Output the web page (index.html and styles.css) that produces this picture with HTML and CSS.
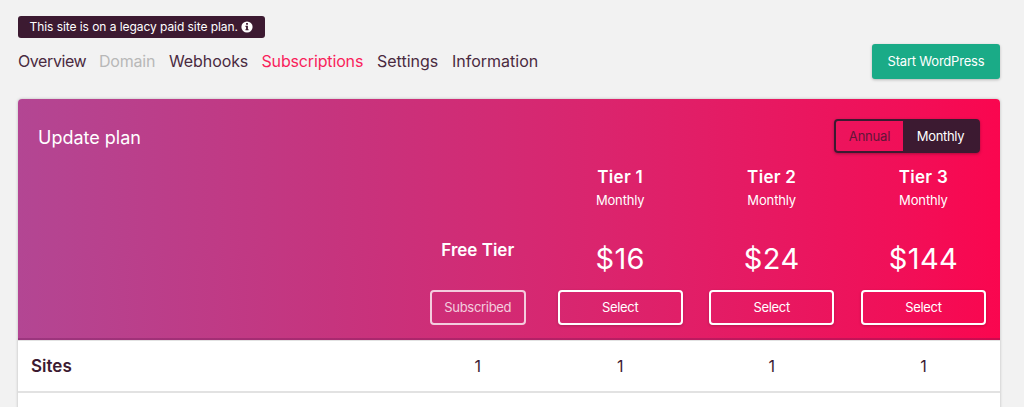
FILE: index.html
```html
<!DOCTYPE html>
<html lang="en">
<head>
<meta charset="utf-8">
<title>Subscriptions</title>
<link rel="stylesheet" href="styles.css">
</head>
<body>
<main class="page">
  <div class="notice"><span class="notice-text">This site is on a legacy paid site plan.</span>
    <svg class="info" viewBox="0 0 12 12" aria-hidden="true"><circle cx="6" cy="6" r="5.6" fill="#fff"/><path d="M5.1 2.1h1.8v1.7H5.1zM4.5 4.8h2.4v3.4h.7v1.1H4.4V8.2h.7V5.9h-.6z" fill="#3c1a31"/></svg>
  </div>
  <header class="topbar">
    <nav class="tabs">
      <a class="tab overview">Overview</a>
      <a class="tab domain">Domain</a>
      <a class="tab webhooks">Webhooks</a>
      <a class="tab subscriptions">Subscriptions</a>
      <a class="tab settings">Settings</a>
      <a class="tab information">Information</a>
    </nav>
    <button class="start">Start WordPress</button>
  </header>
  <section class="card">
    <div class="hero">
      <div class="hero-head">
        <h1 class="title">Update plan</h1>
        <div class="period"><button class="option annual">Annual</button><button class="option monthly">Monthly</button></div>
      </div>
      <div class="grid plans">
        <div></div>
        <div class="plan free"><h2 class="name">Free Tier</h2><button class="choose subscribed">Subscribed</button></div>
        <div class="plan"><h2 class="name tier">Tier 1</h2><p class="cycle">Monthly</p><p class="price">$16</p><button class="choose">Select</button></div>
        <div class="plan"><h2 class="name tier">Tier 2</h2><p class="cycle">Monthly</p><p class="price">$24</p><button class="choose">Select</button></div>
        <div class="plan"><h2 class="name tier">Tier 3</h2><p class="cycle">Monthly</p><p class="price">$144</p><button class="choose">Select</button></div>
      </div>
    </div>
    <div class="grid row"><div class="feature">Sites</div><div>1</div><div>1</div><div>1</div><div>1</div></div>
    <div class="row-next"></div>
  </section>
</main>
</body>
</html>
```
FILE: styles.css
```css
* { box-sizing: border-box; }
body {
  margin: 0;
  height: 407px;
  overflow: hidden;
  background: #f2f2f2;
  color: #3c1a31;
  font-family: Inter, "Liberation Sans", sans-serif;
}
h1, h2, p { margin: 0; }
button { font: inherit; padding: 0; margin: 0; }
.page { padding: 16px 24px 0 18px; }
.notice {
  display: flex;
  align-items: center;
  gap: 3px;
  width: 247px;
  height: 22px;
  padding: 0 0 1px 11.5px;
  border-radius: 3px;
  background: #3c1a31;
  color: #fff;
  font-size: 12px;
  white-space: nowrap;
}
.notice-text { width: 208px; letter-spacing: -0.06px; }
.info { width: 12px; height: 12px; margin-top: 1px; flex: none; }
.topbar {
  display: flex;
  justify-content: space-between;
  height: 35px;
  margin-top: 6px;
}
.tabs {
  display: grid;
  grid-template-columns: 81px 70px 92.5px 115.5px 75px auto;
  line-height: 35px;
  font-size: 16px;
  color: #4a2a3f;
}
.overview { letter-spacing: -0.4px; }
.domain { color: #b8b8b8; letter-spacing: -0.2px; }
.webhooks { letter-spacing: -0.1px; }
.subscriptions { color: #f91e5b; letter-spacing: -0.15px; }
.start {
  width: 128px;
  height: 35px;
  border: 0;
  border-radius: 3px;
  background: #1aab87;
  color: #fff;
  font-size: 13px;
  letter-spacing: -0.2px;
  padding-bottom: 1px;
  box-shadow: 0 1px 3px rgba(0, 0, 0, .25);
}
.card {
  width: 982px;
  margin-top: 20px;
  border-radius: 4px 4px 0 0;
  background: #fff;
  box-shadow: 0 0 3px rgba(0, 0, 0, .25);
}
.hero {
  height: 241px;
  border-bottom: 2px solid rgba(100, 20, 80, .3);
  border-radius: 4px 4px 0 0;
  background: linear-gradient(90deg, #b34693, #c6347e 32%, #db246d 60%, #f10f58 90%, #fa064f) border-box;
  color: #fff;
}
.hero-head {
  display: flex;
  justify-content: space-between;
  height: 66px;
  padding: 20px 20px 0;
}
.title { font-size: 18px; font-weight: 400; line-height: 37px; }
.period {
  display: flex;
  width: 146px;
  height: 34px;
  border: 2px solid #3c1a31;
  border-radius: 4px;
  box-shadow: 0 1px 3px rgba(0, 0, 0, .3);
}
.option { border: 0; background: none; font-size: 13px; padding-bottom: 1px; }
.annual { width: 67px; color: #621638; letter-spacing: -0.2px; }
.monthly { flex: 1; background: #3c1a31; color: #fff; letter-spacing: -0.3px; }
.grid { display: grid; grid-template-columns: 393px 133.5px 151.4px 151.6px 151.9px; }
.plans { height: 160px; }
.plan {
  display: flex;
  flex-direction: column;
  align-items: center;
}
.name { font-size: 17px; font-weight: 600; line-height: 24px; }
.tier { letter-spacing: 0.3px; }
.cycle { font-size: 13px; line-height: 22px; letter-spacing: -0.15px; }
.price { margin-top: 30px; font-size: 29px; line-height: 36px; letter-spacing: 0.4px; }
.choose {
  width: 125px;
  height: 35px;
  margin-top: auto;
  padding-bottom: 2px;
  border: 2px solid #fff;
  border-radius: 4px;
  background: transparent;
  color: #fff;
  font-size: 13px;
  letter-spacing: -0.3px;
  box-shadow: 0 1px 3px rgba(0, 0, 0, .2);
}
.free { padding-top: 73px; }
.subscribed { width: 96px; opacity: .76; box-shadow: none; }
.row {
  height: 53px;
  border-top: 1px solid #e2e2e2;
  border-bottom: 2px solid #e2e2e2;
  line-height: 51px;
  text-align: center;
  font-size: 16px;
}
.feature { padding-left: 13px; text-align: left; font-size: 17px; font-weight: 600; }
.row-next { height: 30px; }
```
